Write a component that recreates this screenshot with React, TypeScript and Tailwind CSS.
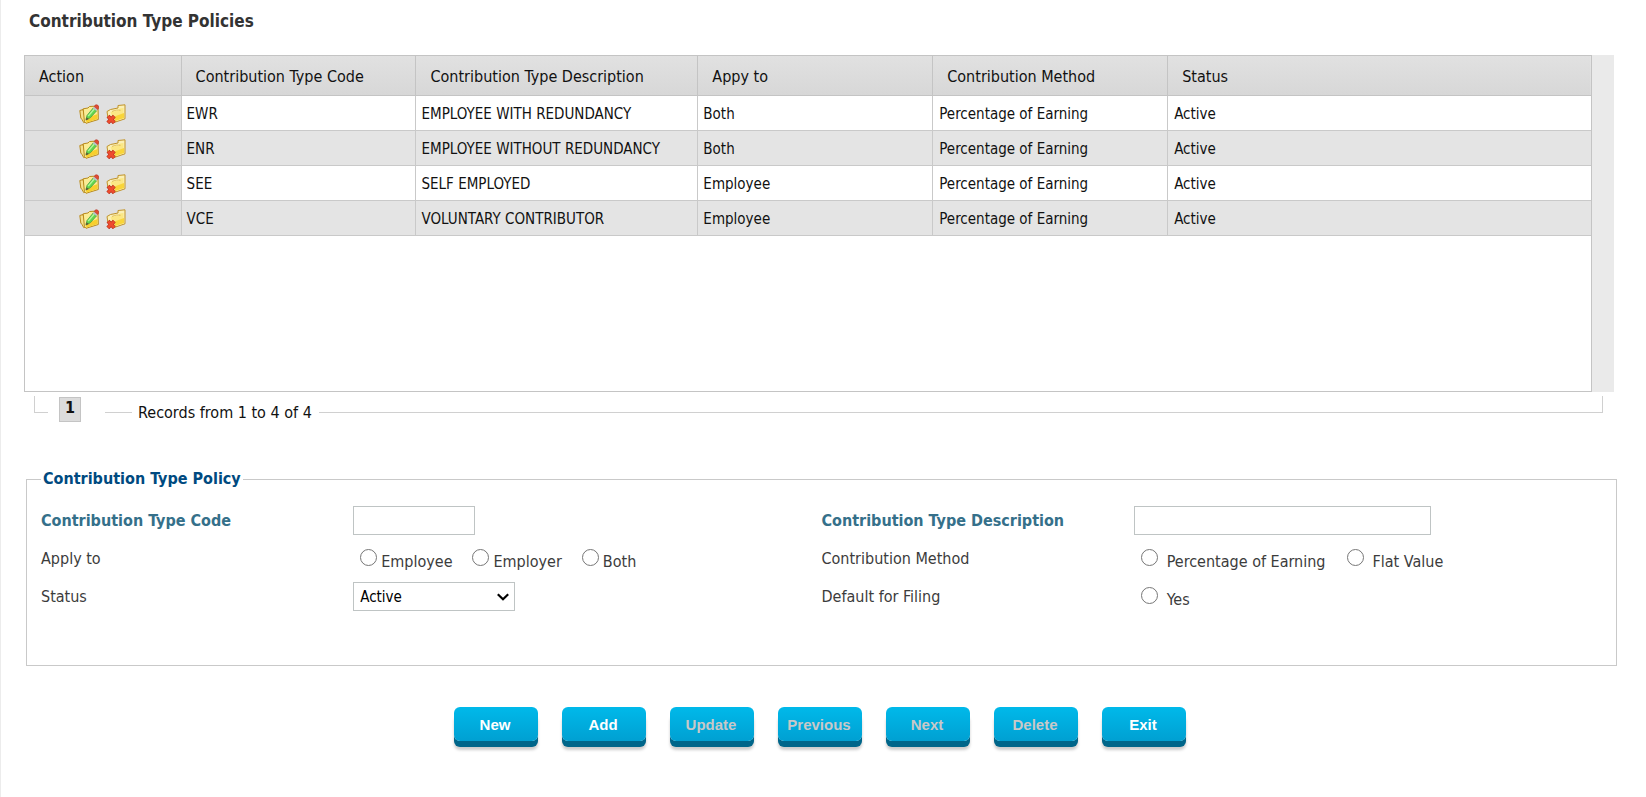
import { useState } from "react";

const policies = [
  { code: "EWR", description: "EMPLOYEE WITH REDUNDANCY", applyTo: "Both" },
  { code: "ENR", description: "EMPLOYEE WITHOUT REDUNDANCY", applyTo: "Both" },
  { code: "SEE", description: "SELF EMPLOYED", applyTo: "Employee" },
  { code: "VCE", description: "VOLUNTARY CONTRIBUTOR", applyTo: "Employee" },
];

const headers = [
  "Contribution Type Code",
  "Contribution Type Description",
  "Appy to",
  "Contribution Method",
  "Status",
];

const buttons = [
  { name: "New", disabled: false },
  { name: "Add", disabled: false },
  { name: "Update", disabled: true },
  { name: "Previous", disabled: true },
  { name: "Next", disabled: true },
  { name: "Delete", disabled: true },
  { name: "Exit", disabled: false },
];

function EditIcon() {
  return (
    <svg width="20" height="20" viewBox="0 0 20 20" aria-hidden="true">
      <path d="M.8 6.5 4 5.5l3 12-2.2 1.2L3 15.5 1.8 14z" fill="#f6e08a" stroke="#b98a1c" />
      <path d="M4.2 4.8 9 4l1.5-1.5L19 2l.3 13.5L7 19.3l-1.6-2z" fill="#fbec94" stroke="#b98a1c" />
      <path d="M6.5 14.5 18.5 10v5l-11 3.5z" fill="#f8cf2c" />
      <path d="M7 15.8 8 11.5 14.2 4l3.4 2.8-6.3 7z" fill="#62d84e" stroke="#4aa040" strokeWidth=".8" />
      <path d="M9.2 12.1 15.2 5" stroke="#b5f59c" strokeWidth="1.4" />
      <path d="m6.6 16.5 1-3.2 2.2 1.6z" fill="#5c5a3a" />
      <path d="m13.8 4.2 1.5-1.7 3.4 2.8L17.4 7z" fill="#b9c0c8" />
      <path d="M15.2 2.5c.8-1.8 2.5-2.2 3.7-1.2s1.1 3-.1 4.2z" fill="#e04a36" stroke="#b9372a" strokeWidth=".6" />
    </svg>
  );
}

function DeleteIcon() {
  return (
    <svg width="20" height="20" viewBox="0 0 20 20" aria-hidden="true">
      <path d="M1 7.5 4.5 5.5 12 4V1.5L19 .8v14L8 18.5 2 14z" fill="#fbf0b4" stroke="#c0932a" />
      <path d="m4.5 8 8-1.6L14 4.5l3.5-.5v10L8 17.2z" fill="#fbe784" />
      <path d="m8.5 12.5 9.5-3.5v5l-9.5 3.2z" fill="#f9d539" />
      <path d="M6 7.5c3-1.5 6-1.8 8.5-1.2" fill="none" stroke="#d9b44a" strokeWidth=".8" />
      <path d="M2 12.2 8.3 18.8M8.3 12.2 1.8 18.8" stroke="#b62f1b" strokeWidth="4" />
      <path d="m2.2 12.5 5.9 6M8.1 12.5 2 18.5" stroke="#ee4c2e" strokeWidth="2.6" />
    </svg>
  );
}

function Radio({ name, label, wide }: { name: string; label: string; wide?: boolean }) {
  return (
    <label className={wide ? "flex items-start gap-[9px]" : "flex items-start gap-1"}>
      <input type="radio" name={name} value={label} className="size-[17px] mt-px" />
      <span className="pt-1 leading-5">{label}</span>
    </label>
  );
}

export default function App() {
  const [status, setStatus] = useState("Active");
  const [code, setCode] = useState("");
  const [description, setDescription] = useState("");

  return (
    <main className="min-h-screen border-l border-[#ececec] bg-white font-['DejaVu_Sans_Condensed','DejaVu_Sans',sans-serif] text-base text-[#111]">
      <h1 className="pl-7 pt-[9px] text-[17px] leading-6 font-bold text-[#333]">
        Contribution Type Policies
      </h1>

      {/* grid */}
      <section className="mt-[22px] ml-[23px] mr-8">
        <div className="bg-[#eaeaea] pr-[22px]">
          <div className="h-[337px] border border-[#c4c4c4] bg-white">
            <table className="w-full table-fixed border-separate border-spacing-0 text-left">
              <colgroup>
                <col className="w-[10%]" />
                <col className="w-[15%]" />
                <col className="w-[18%]" />
                <col className="w-[15%]" />
                <col className="w-[15%]" />
                <col className="w-[27%]" />
              </colgroup>
              <thead>
                <tr className="h-10 bg-linear-to-b from-[#e1e1e1] to-[#d7d7d7]">
                  <th className="border-r border-b border-[#c4c4c4] pl-[14px] pt-[3px] font-normal">
                    Action
                  </th>
                  {headers.map((header) => (
                    <th
                      key={header}
                      className="border-r border-b border-[#c4c4c4] pl-[14px] pt-[3px] font-normal last:border-r-0"
                    >
                      {header}
                    </th>
                  ))}
                </tr>
              </thead>
              <tbody className="text-[15px]">
                {policies.map((policy) => (
                  <tr key={policy.code} className="h-[35px] even:bg-[#e4e4e4]">
                    <td className="border-r border-b border-[#c9c9c9] bg-[#e0e0e0]">
                      <div className="flex justify-center gap-[7px] pt-[2px]">
                        <button type="button" aria-label={`Edit ${policy.code}`}>
                          <EditIcon />
                        </button>
                        <button type="button" aria-label={`Delete ${policy.code}`}>
                          <DeleteIcon />
                        </button>
                      </div>
                    </td>
                    <td className="border-r border-b border-[#c9c9c9] pl-[5px] pt-[2px]">{policy.code}</td>
                    <td className="border-r border-b border-[#c9c9c9] pl-[5px] pt-[2px]">{policy.description}</td>
                    <td className="border-r border-b border-[#c9c9c9] pl-[5px] pt-[2px]">{policy.applyTo}</td>
                    <td className="border-r border-b border-[#c9c9c9] pl-[6px] pt-[2px]">Percentage of Earning</td>
                    <td className="border-b border-[#c9c9c9] pl-[6px] pt-[2px]">Active</td>
                  </tr>
                ))}
              </tbody>
            </table>
          </div>
        </div>

        {/* pager */}
        <div className="mt-1 ml-[10px] mr-[11px] flex h-[27px] items-start">
          <span className="h-[17px] w-[14px] border-b border-l border-[#d0d0d0]" />
          <button
            type="button"
            className="ml-[11px] mt-px h-[25px] w-[22px] border border-[#c4c4c4] bg-[#dcdcdc] pb-[3px] text-base leading-5 font-bold"
          >
            1
          </button>
          <span className="ml-6 h-[17px] w-[27px] border-b border-[#d0d0d0]" />
          <p className="mr-[7px] ml-[6px] pt-[7px] leading-5">Records from 1 to 4 of 4</p>
          <span className="h-[17px] flex-1 border-r border-b border-[#d0d0d0]" />
        </div>
      </section>

      {/* form */}
      <fieldset className="mt-[45px] ml-[25px] mr-[29px] h-[198px] border border-[#c9c9c9] px-[14px] text-[#3c3c3c]">
        <legend className="px-[2px] leading-[22px] font-bold text-[#004a80]">
          Contribution Type Policy
        </legend>
        <div className="mt-4 grid grid-cols-[20%_30%_20%_30%] gap-y-[8px]">
          <label htmlFor="code" className="leading-[30px] font-bold text-[#35708a]">
            Contribution Type Code
          </label>
          <div>
            <input
              id="code"
              type="text"
              value={code}
              onChange={(e) => setCode(e.target.value)}
              className="block h-[29px] w-[122px] border border-[#bfc4c4] bg-white px-1"
            />
          </div>
          <label htmlFor="description" className="leading-[30px] font-bold text-[#35708a]">
            Contribution Type Description
          </label>
          <div>
            <input
              id="description"
              type="text"
              value={description}
              onChange={(e) => setDescription(e.target.value)}
              className="block h-[29px] w-[297px] border border-[#bfc4c4] bg-white px-1"
            />
          </div>

          <span className="leading-[30px]">Apply to</span>
          <div className="flex gap-5 pt-1 pl-[7px]">
            <Radio name="applyTo" label="Employee" />
            <Radio name="applyTo" label="Employer" />
            <Radio name="applyTo" label="Both" />
          </div>
          <span className="leading-[30px]">Contribution Method</span>
          <div className="flex gap-[21px] pt-1 pl-[7px]">
            <Radio name="method" label="Percentage of Earning" wide />
            <Radio name="method" label="Flat Value" wide />
          </div>

          <label htmlFor="status" className="leading-[30px]">
            Status
          </label>
          <div className="relative w-[162px]">
            <select
              id="status"
              value={status}
              onChange={(e) => setStatus(e.target.value)}
              className="block h-[29px] w-full appearance-none border border-[#bfc4c4] bg-white pt-px pl-[6px] text-[15px] text-black"
            >
              <option>Active</option>
              <option>Inactive</option>
            </select>
            <svg
              className="pointer-events-none absolute top-[11px] right-[6px]"
              width="12"
              height="8"
              viewBox="0 0 12 8"
              fill="none"
              aria-hidden="true"
            >
              <path d="m.8 1.2 5.2 5 5.2-5" stroke="#000" strokeWidth="2.2" />
            </svg>
          </div>
          <span className="leading-[30px]">Default for Filing</span>
          <div className="flex pt-1 pl-[7px]">
            <Radio name="defaultFiling" label="Yes" wide />
          </div>
        </div>
      </fieldset>

      <div className="mt-[41px] mr-[7px] flex justify-center gap-6">
        {buttons.map((button) => (
          <button
            key={button.name}
            type="button"
            disabled={button.disabled}
            className="h-[34px] w-[84px] rounded-md bg-linear-to-b from-[#00b9ea] to-[#00a0d2] pt-[2px] pr-[2px] font-['Liberation_Sans',sans-serif] text-[15px] font-bold text-white shadow-[0_6px_0_#00668a,0_9px_3px_rgba(0,0,0,0.2)] disabled:text-[#c8c8c8]"
          >
            {button.name}
          </button>
        ))}
      </div>
    </main>
  );
}
